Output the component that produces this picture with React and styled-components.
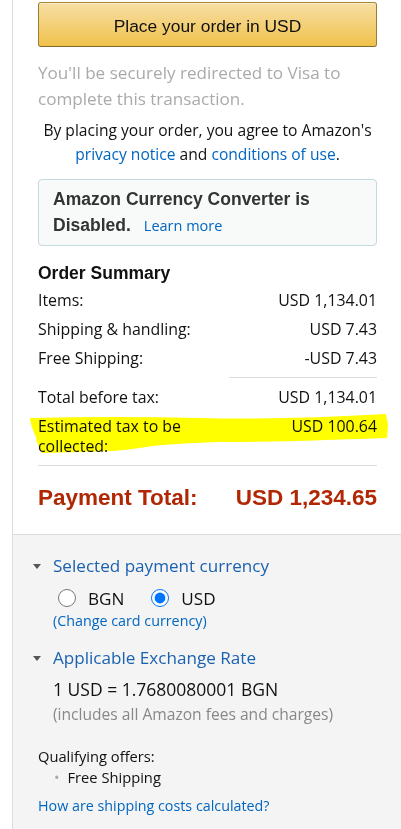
import React from "react";
import styled, { createGlobalStyle } from "styled-components";

const GlobalStyle = createGlobalStyle`
  body {
    margin: 0;
    background: #fff;
  }
`;

const Page = styled.div`
  width: 401px;
  min-height: 829px;
  padding-left: 12px;
  box-sizing: border-box;
  display: flex;
`;

const Panel = styled.div`
  flex: 1;
  display: flex;
  flex-direction: column;
  border-left: 1px solid #ddd;
  font-family: "Open Sans", "Liberation Sans", sans-serif;
  color: #111;
`;

const Top = styled.section`
  padding: 2px 24px 23px 25px;
`;

const PlaceButton = styled.button`
  display: block;
  width: 100%;
  height: 45px;
  padding: 3px 0 0;
  border: 1px solid #a88734;
  border-color: #a88734 #9c7e31 #846a29;
  border-radius: 3px;
  background: linear-gradient(to bottom, #f7dfa5, #f0c14b);
  box-shadow: inset 0 1px 0 rgba(255, 255, 255, 0.4);
  font-family: "Liberation Sans", Arial, sans-serif;
  font-size: 17.4px;
  color: #111;
  cursor: pointer;
`;

const Notice = styled.p`
  margin: 13px 0 0;
  font-size: 17.1px;
  line-height: 26px;
  color: #aaa;
`;

const Agreement = styled.p`
  margin: 6px 0 0;
  font-size: 15.6px;
  line-height: 24px;
  text-align: center;
`;

const Link = styled.a`
  color: #0066c0;
  text-decoration: none;
  font-weight: normal;
`;

const InfoBox = styled.div`
  margin-top: 13px;
  padding: 6px 14px;
  border: 1px solid #c5d8e2;
  border-radius: 4px;
  background: #f8f9f9;
  font-family: "Liberation Sans", Arial, sans-serif;
  font-weight: bold;
  font-size: 17.5px;
  line-height: 26px;
  color: #333;
`;

const BoxLink = styled(Link)`
  margin-left: 13px;
  font-family: "Open Sans", sans-serif;
  font-size: 14.5px;
`;

const Heading = styled.h4`
  margin: 16px 0 0;
  font-family: "Liberation Sans", Arial, sans-serif;
  font-size: 17.5px;
  line-height: 22px;
  color: #111;
`;

const Rows = styled.div`
  margin-top: 6px;
  display: flex;
  flex-direction: column;
  gap: 9px;
`;

const Row = styled.div`
  position: relative;
  display: grid;
  grid-template-columns: 1fr 148px;
  font-size: 15.9px;
  line-height: 20px;
`;

const Amount = styled.span`
  text-align: right;
`;

const Rule = styled.hr`
  margin: 0 0 0 auto;
  width: ${(p) => (p.$partial ? "148px" : "100%")};
  border: 0;
  border-top: 1px solid #ddd;
`;

const Marker = styled.svg`
  position: absolute;
  left: -10px;
  top: -3px;
  mix-blend-mode: multiply;
  pointer-events: none;
`;

const Total = styled.div`
  margin-top: 19px;
  display: flex;
  justify-content: space-between;
  font-family: "Liberation Sans", Arial, sans-serif;
  font-weight: bold;
  font-size: 22.5px;
  line-height: 26px;
  color: #b12704;
`;

const Bottom = styled.section`
  flex: 1;
  padding: 19px 24px 20px 20px;
  border-top: 1px solid #ddd;
  background: #f4f4f4;
`;

const ExpanderHead = styled.div`
  margin-top: ${(p) => p.$top || 0}px;
  display: grid;
  grid-template-columns: 20px 1fr;
  align-items: center;
  font-size: 17.1px;
  line-height: 24px;
  color: #1a62b0;
`;

const Caret = styled.span`
  width: 0;
  height: 0;
  border-left: 4px solid transparent;
  border-right: 4px solid transparent;
  border-top: 5px solid #555;
`;

const ExpanderBody = styled.div`
  padding-left: 20px;
`;

const RadioRow = styled.div`
  margin-top: 8px;
  padding-left: 5px;
  display: flex;
  gap: 27px;
  height: 24px;
  align-items: center;
`;

const RadioLabel = styled.label`
  display: flex;
  align-items: center;
  gap: 12px;
  font-size: 17.1px;
`;

const Radio = styled.input`
  width: 18px;
  height: 18px;
  margin: 0;
`;

const SmallLink = styled(Link)`
  display: block;
  margin-top: ${(p) => p.$top || 0}px;
  font-size: 14.3px;
  line-height: 20px;
`;

const Rate = styled.div`
  margin-top: 7px;
  font-size: 17.5px;
  line-height: 24px;
`;

const Muted = styled.div`
  margin-top: 3px;
  font-size: 15.6px;
  line-height: 20px;
  color: #888;
`;

const Offers = styled.div`
  margin: 22px 0 0 5px;
  font-size: 14.7px;
  line-height: 20px;
`;

const OfferList = styled.ul`
  margin: 1px 0 0;
  padding: 0;
  list-style: none;
`;

const Offer = styled.li`
  display: flex;
  gap: 8px;
  padding-left: 16px;

  &::before {
    content: "•";
    color: #aaa;
  }
`;

const Footer = styled(SmallLink)`
  margin-left: 5px;
`;

const summary = [
  ["Items:", "USD 1,134.01"],
  ["Shipping & handling:", "USD 7.43"],
  ["Free Shipping:", "-USD 7.43"],
];

const App = () => {
  return (
    <Page>
      <GlobalStyle />
      <Panel>
        <Top>
          <PlaceButton>Place your order in USD</PlaceButton>
          <Notice>
            You'll be securely redirected to Visa to complete this transaction.
          </Notice>
          <Agreement>
            By placing your order, you agree to Amazon's{" "}
            <Link href="#">privacy notice</Link> and{" "}
            <Link href="#">conditions of use</Link>.
          </Agreement>
          <InfoBox>
            Amazon Currency Converter is Disabled.
            <BoxLink href="#">Learn more</BoxLink>
          </InfoBox>
          <Heading>Order Summary</Heading>
          <Rows>
            {summary.map(([label, value]) => (
              <Row key={label}>
                <span>{label}</span>
                <Amount>{value}</Amount>
              </Row>
            ))}
            <Rule $partial />
            <Row>
              <span>Total before tax:</span>
              <Amount>USD 1,134.01</Amount>
            </Row>
            <Row>
              <span>Estimated tax to be collected:</span>
              <Amount>USD 100.64</Amount>
              <Marker width="362" height="42" viewBox="0 0 362 42">
                <path
                  d="M2 5 Q90 3 172 5 T358 1 L360 12 L359 25 Q300 27 270 28 Q210 29 190 29 Q140 31 125 33 Q100 37 85 38 L14 40 Q9 32 8 24 Q3 14 2 5 Z"
                  fill="#ffff00"
                />
              </Marker>
            </Row>
            <Rule />
          </Rows>
          <Total>
            <span>Payment Total:</span>
            <span>USD 1,234.65</span>
          </Total>
        </Top>
        <Bottom>
          <ExpanderHead>
            <Caret />
            <span>Selected payment currency</span>
          </ExpanderHead>
          <ExpanderBody>
            <RadioRow>
              <RadioLabel>
                <Radio type="radio" name="currency" />
                BGN
              </RadioLabel>
              <RadioLabel>
                <Radio type="radio" name="currency" defaultChecked />
                USD
              </RadioLabel>
            </RadioRow>
            <SmallLink href="#" $top={1}>
              (Change card currency)
            </SmallLink>
          </ExpanderBody>
          <ExpanderHead $top={15}>
            <Caret />
            <span>Applicable Exchange Rate</span>
          </ExpanderHead>
          <ExpanderBody>
            <Rate>1 USD = 1.7680080001 BGN</Rate>
            <Muted>(includes all Amazon fees and charges)</Muted>
          </ExpanderBody>
          <Offers>
            Qualifying offers:
            <OfferList>
              <Offer>Free Shipping</Offer>
            </OfferList>
          </Offers>
          <Footer href="#" $top={9}>
            How are shipping costs calculated?
          </Footer>
        </Bottom>
      </Panel>
    </Page>
  );
};

export default App;
